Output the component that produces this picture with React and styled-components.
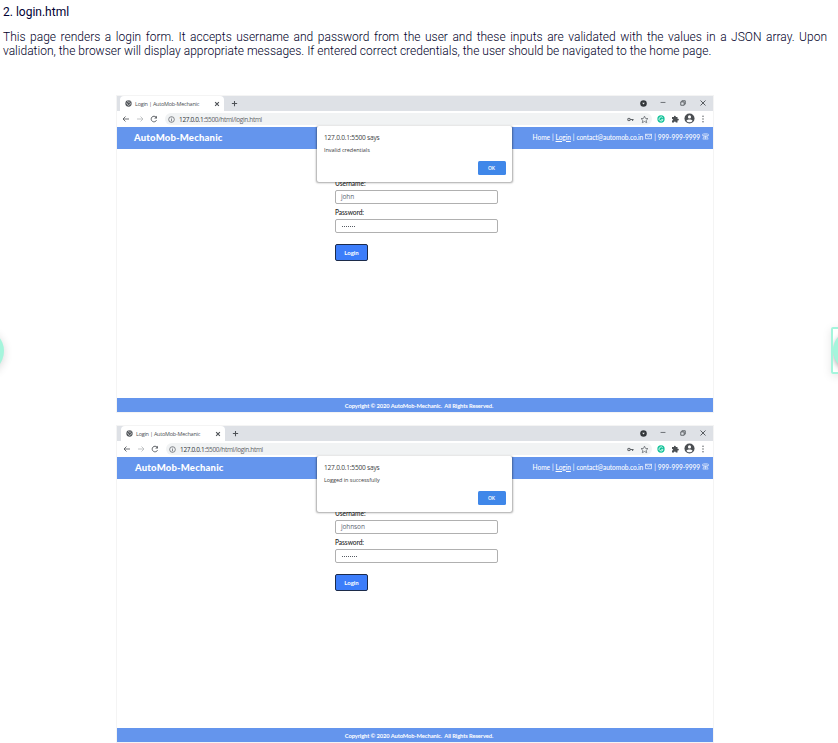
import React from "react";
import styled, { createGlobalStyle } from "styled-components";

const Global = createGlobalStyle`
  * { box-sizing: border-box; }
  body { margin: 0; background: #fff; overflow: hidden; }
`;

const Page = styled.main`
  position: relative;
  width: 838px;
  height: 743px;
  overflow: hidden;
  font-family: Roboto, sans-serif;
  color: #000033;
`;

const Title = styled.h1`
  margin: 0;
  padding: 5px 0 0 3px;
  height: 30px;
  font-size: 12px;
  line-height: 14px;
  font-weight: 400;
`;

const Intro = styled.p`
  margin: 0;
  padding-left: 3px;
  width: 827px;
  height: 66px;
  font-size: 12px;
  line-height: 14px;
  font-weight: 300;
  color: #000028;
`;

const Line = styled.span`
  display: block;
  white-space: nowrap;
  text-align-last: ${(p) => (p.$justify ? "justify" : "left")};
`;

const Shots = styled.div`
  display: flex;
  flex-direction: column;
  gap: 14px;
  padding-left: 117px;
`;

const Browser = styled.section`
  position: relative;
  display: flex;
  flex-direction: column;
  width: 596px;
  height: 316px;
  font-family: "Open Sans", sans-serif;
  box-shadow: 0 0 0 1px #f4f4f4;
`;

const TabStrip = styled.div`
  display: flex;
  align-items: stretch;
  height: 15px;
  background: #dee1e6;
  color: #4d5156;
`;

const Tab = styled.div`
  display: flex;
  align-items: center;
  width: 104px;
  margin-left: ${(p) => 3 + p.$shift}px;
  padding: 0 4px 0 5px;
  background: #fff;
  border-radius: 4px 4px 0 0;
  font-size: 5.5px;
  svg { flex: none; }
`;

const TabName = styled.span`
  flex: 1;
  margin-left: 3px;
  white-space: nowrap;
  letter-spacing: -0.24px;
`;

const NewTab = styled.div`
  display: flex;
  align-items: center;
  margin-left: 7px;
`;

const IconGrid = styled.div`
  display: grid;
  grid-template-columns: repeat(4, ${(p) => p.$cell}px);
  align-items: center;
  justify-items: center;
  margin-left: auto;
  padding-bottom: 1px;
  color: #4a4e52;
`;

const Toolbar = styled.div`
  display: flex;
  align-items: center;
  height: 16px;
  padding: 0 3px 0 5px;
  background: #fff;
  color: #5f6368;
`;

const NavButtons = styled.div`
  display: grid;
  grid-template-columns: repeat(3, 14px);
  align-items: center;
  width: 43px;
  margin-left: ${(p) => p.$shift}px;
`;

const Address = styled.div`
  display: flex;
  align-items: center;
  width: ${(p) => 487 - p.$shift}px;
  height: 12px;
  padding: 0 3px 0 3px;
  border-radius: 6px;
  background: #f1f3f4;
  font-size: 6.5px;
`;

const Url = styled.span`
  flex: 1;
  margin-left: 4px;
  letter-spacing: -0.34px;
  b { color: #303438; font-weight: 400; }
`;

const AddressIcons = styled.div`
  display: flex;
  align-items: center;
  gap: 6px;
`;

const SiteHeader = styled.header`
  display: flex;
  align-items: center;
  justify-content: space-between;
  height: 22px;
  padding: 0 4px 2px ${(p) => 17 + p.$shift}px;
  background: #6495ed;
  color: #fff;
  font-family: Lato, sans-serif;
`;

const Brand = styled.strong`
  font-size: 9.5px;
  font-weight: 900;
  letter-spacing: 0.2px;
`;

const SiteNav = styled.nav`
  display: flex;
  align-items: center;
  gap: 2px;
  font-size: 6.6px;
  font-weight: 500;
  letter-spacing: -0.08px;
  line-height: 8px;
  padding-bottom: 1px;
  white-space: nowrap;
  a { text-decoration: underline; text-underline-offset: 1px; }
`;

const FormArea = styled.div`
  display: flex;
  flex-direction: column;
  align-items: flex-start;
  flex: 1;
  padding: 30px 0 0 218px;
`;

const Label = styled.label`
  height: 11px;
  font-family: Lato, sans-serif;
  font-size: 6.6px;
  line-height: 9px;
  font-weight: 500;
  letter-spacing: -0.06px;
  color: #222;
`;

const Field = styled.div`
  width: 163px;
  height: 14px;
  margin-bottom: 4px;
  padding: 0 5px;
  border: 1px solid #b0b0b0;
  border-radius: 2px;
  font-size: 6.5px;
  line-height: 12px;
  letter-spacing: -0.1px;
  color: #5c6573;
`;

const Dots = styled.div`
  display: flex;
  align-items: center;
  gap: 0.8px;
  height: 13px;
  padding-left: 0.5px;
`;

const Dot = styled.i`
  width: 1.3px;
  height: 1.3px;
  border-radius: 50%;
  background: #1f2630;
`;

const LoginButton = styled.button`
  width: 33px;
  height: 17px;
  margin-top: 7px;
  padding: 0;
  border: 1px solid #1c2b4a;
  border-radius: 2px;
  background: #3c7dfa;
  color: #fff;
  font: 700 6px/13px Lato, sans-serif;
`;

const SiteFooter = styled.footer`
  height: 14px;
  padding-left: 8px;
  background: #6495ed;
  color: #fff;
  font: 700 5.8px/15px Lato, sans-serif;
  letter-spacing: -0.11px;
  text-align: center;
  white-space: pre;
`;

const Alert = styled.div`
  position: absolute;
  left: 200px;
  top: 30px;
  display: flex;
  flex-direction: column;
  width: 195px;
  height: 55.5px;
  padding: 7px 6.5px 7px 7px;
  background: #fff;
  border-radius: 2px;
  box-shadow: 0 0.5px 2px 0.5px rgba(0, 0, 0, 0.35);
  color: #3c4043;
  line-height: 9px;
`;

const AlertTitle = styled.div`
  font-size: 6.6px;
  letter-spacing: -0.22px;
`;

const AlertText = styled.div`
  margin-top: 4px;
  font-size: 5.5px;
  letter-spacing: -0.04px;
`;

const OkButton = styled.button`
  align-self: flex-end;
  width: 28px;
  height: 14px;
  margin-top: auto;
  padding: 0;
  border: 0;
  border-radius: 1.5px;
  background: #3f87e9;
  color: #fff;
  font: 600 5px/14px "Open Sans", sans-serif;
`;

const LeftBubble = styled.div`
  position: absolute;
  left: -40px;
  top: 329px;
  width: 43.5px;
  height: 44px;
  border-radius: 50%;
  background: #a5f5dc;
  box-shadow: 0 2px 10px rgba(0, 0, 0, 0.16);
`;

const RightHandle = styled.div`
  position: absolute;
  left: 831px;
  top: 327px;
  width: 50px;
  height: 47px;
  padding: 1px 0 0 0;
  border: 2px solid #a5f5dc;
  border-radius: 2px;
  overflow: hidden;
  box-shadow: 0 2px 10px rgba(0, 0, 0, 0.1);
`;

const RightBubble = styled.div`
  width: 41px;
  height: 41px;
  border-radius: 50%;
  background: #a5f5dc;
  box-shadow: 0 2px 5px rgba(0, 0, 0, 0.3);
`;

const Svg = ({ size = 8, box = 16, children, color = "currentColor" }) => (
  <svg width={size} height={size} viewBox={`0 0 ${box} ${box}`} fill="none" stroke={color} strokeWidth="1.7">
    {children}
  </svg>
);

const Globe = () => (
  <Svg size={7}>
    <circle cx="8" cy="8" r="7.2" fill="#4d5156" stroke="none" />
    <path d="M2 6.5 6 9v2l2 1.5-1.5 2M7 1.5 6 4l3 1.5L12.5 4M14 8l-3 1-.5 3" stroke="#fff" strokeWidth="1.3" />
  </Svg>
);
const Cross = ({ size, thin }) => <Svg size={size}><path d="m3 3 10 10M13 3 3 13" strokeWidth={thin ? 1.8 : 3} /></Svg>;
const Plus = () => <Svg size={7}><path d="M8 2v12M2 8h12" strokeWidth="2.4" /></Svg>;
const Arrow = ({ flip }) => (
  <Svg size={8} color={flip ? "#b8babd" : "#55585c"}>
    <path d={flip ? "M2 8h12M9 3l5 5-5 5" : "M14 8H2M7 3 2 8l5 5"} />
  </Svg>
);
const Reload = () => (
  <Svg size={8}><path d="M13 10.5A5.6 5.6 0 1 1 12.3 4.5" strokeWidth="2" /><path d="M14 1.5v5.7H8.3z" fill="currentColor" stroke="none" /></Svg>
);
const Info = () => <Svg size={7}><circle cx="8" cy="8" r="6.5" /><path d="M8 7v5M8 4v1.7" /></Svg>;
const KeyIcon = () => (
  <Svg size={7}><circle cx="4.5" cy="8" r="2.8" strokeWidth="2.4" /><path d="M7 8h8M12.8 8v3.5" strokeWidth="2.4" /></Svg>
);
const Star = () => <Svg size={9}><path d="m8 2 1.8 4 4.4.4-3.3 3 1 4.3L8 11.5l-3.9 2.2 1-4.3-3.3-3 4.4-.4z" strokeWidth="1.3" /></Svg>;
const Grammar = () => (
  <Svg size={8}><circle cx="8" cy="8" r="7.3" fill="#15c39a" stroke="none" /><path d="M11.5 5.8a4 4 0 1 0 .4 3.5H8.5" stroke="#fff" strokeWidth="1.6" /></Svg>
);
const Puzzle = () => (
  <Svg size={8}><path d="M2 4h4c-.8-3.5 4.500-3.500 3.500 0H13v3.500c3.500-.5 3.500 4 0 3.500v4H9.500c.3-3-3.800-3-3.500 0H2v-4c3 .3 3-3.500 0-3z" fill="currentColor" stroke="none" /></Svg>
);
const Avatar = () => (
  <Svg size={11}>
    <circle cx="8" cy="8" r="7.3" fill="currentColor" stroke="none" />
    <circle cx="8" cy="5.7" r="2.3" fill="#fff" stroke="none" />
    <path d="M3.5 11.3c1.5-2.4 7.500-2.400 9 0-2 3-7 3-9 0z" fill="#fff" stroke="none" />
  </Svg>
);
const More = () => <Svg size={8}><g fill="currentColor" stroke="none"><circle cx="8" cy="2.5" r="1.3" /><circle cx="8" cy="8" r="1.3" /><circle cx="8" cy="13.5" r="1.3" /></g></Svg>;
const Record = () => <Svg size={7}><circle cx="8" cy="8" r="7.5" fill="#33373b" stroke="none" /><path d="M5 6h6l-3 4.5z" fill="#eee" stroke="none" /></Svg>;
const Minimize = () => <Svg size={6}><path d="M1.5 6.5h13" strokeWidth="2" /></Svg>;
const Restore = () => <Svg size={6}><path d="M2 5h9v9H2zM5 5V2h9v9h-3" strokeWidth="2.2" /></Svg>;
const Mail = () => <Svg size={7}><path d="M1 3h14v10H1zM1 3l7 6 7-6" strokeWidth="1.6" /></Svg>;
const Phone = () => <Svg size={7}><path d="M1 6V3c4-2 10-2 14 0v3h-3V4.5H4V6zM5 6 2 14h12L11 6M5 8h6M4.5 11h7M8 6v8" strokeWidth="1.2" /></Svg>;

function BrowserShot({ message, user, secretLength, shift = 0 }) {
  return (
    <Browser>
      <TabStrip>
        <Tab $shift={shift}>
          <Globe />
          <TabName>Login | AutoMob-Mechanic</TabName>
          <Cross size={6} />
        </Tab>
        <NewTab><Plus /></NewTab>
        <IconGrid $cell={20}>
          <Record /><Minimize /><Restore /><Cross size={8} thin />
        </IconGrid>
      </TabStrip>
      <Toolbar>
        <NavButtons $shift={shift}><Arrow /><Arrow flip /><Reload /></NavButtons>
        <Address $shift={shift}>
          <Info />
          <Url><b>127.0.0.1</b>:5500/html/login.html</Url>
          <AddressIcons><KeyIcon /><Star /></AddressIcons>
        </Address>
        <IconGrid $cell={14}>
          <Grammar /><Puzzle /><Avatar /><More />
        </IconGrid>
      </Toolbar>
      <SiteHeader $shift={shift}>
        <Brand>AutoMob-Mechanic</Brand>
        <SiteNav>
          <span>Home</span>|<a>Login</a>|<span>contact@automob.co.in</span><Mail />|<span>999-999-9999</span><Phone />
        </SiteNav>
      </SiteHeader>
      <FormArea>
        <Label>Username:</Label>
        <Field>{user}</Field>
        <Label>Password:</Label>
        <Field>
          <Dots>{Array.from({ length: secretLength }, (_, i) => <Dot key={i} />)}</Dots>
        </Field>
        <LoginButton>Login</LoginButton>
      </FormArea>
      <SiteFooter>{"Copyright © 2020 AutoMob-Mechanic.  All Rights Reserved."}</SiteFooter>
      <Alert>
        <AlertTitle>127.0.0.1:5500 says</AlertTitle>
        <AlertText>{message}</AlertText>
        <OkButton>OK</OkButton>
      </Alert>
    </Browser>
  );
}

export default function App() {
  return (
    <Page>
      <Global />
      <Title>2. login.html</Title>
      <Intro>
        <Line $justify>This page renders a login form. It accepts username and password from the user and these inputs are validated with the values in a JSON array. Upon</Line>
        <Line>validation, the browser will display appropriate messages. If entered correct credentials, the user should be navigated to the home page.</Line>
      </Intro>
      <Shots>
        <BrowserShot message="Invalid credentials" user="john" secretLength={7} />
        <BrowserShot message="Logged in successfully" user="johnson" secretLength={8} shift={1} />
      </Shots>
      <LeftBubble />
      <RightHandle><RightBubble /></RightHandle>
    </Page>
  );
}
